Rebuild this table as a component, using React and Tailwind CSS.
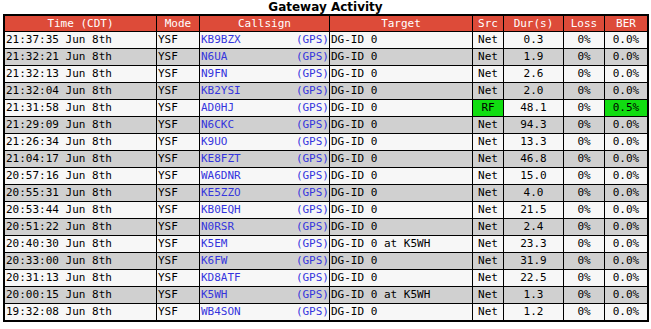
const rows = [
    ['21:37:35 Jun 8th', 'KB9BZX', 'DG-ID 0', 'Net', '0.3', '0%', '0.0%'],
    ['21:32:21 Jun 8th', 'N6UA', 'DG-ID 0', 'Net', '1.9', '0%', '0.0%'],
    ['21:32:13 Jun 8th', 'N9FN', 'DG-ID 0', 'Net', '2.6', '0%', '0.0%'],
    ['21:32:04 Jun 8th', 'KB2YSI', 'DG-ID 0', 'Net', '2.0', '0%', '0.0%'],
    ['21:31:58 Jun 8th', 'AD0HJ', 'DG-ID 0', 'RF', '48.1', '0%', '0.5%'],
    ['21:29:09 Jun 8th', 'N6CKC', 'DG-ID 0', 'Net', '94.3', '0%', '0.0%'],
    ['21:26:34 Jun 8th', 'K9UO', 'DG-ID 0', 'Net', '13.3', '0%', '0.0%'],
    ['21:04:17 Jun 8th', 'KE8FZT', 'DG-ID 0', 'Net', '46.8', '0%', '0.0%'],
    ['20:57:16 Jun 8th', 'WA6DNR', 'DG-ID 0', 'Net', '15.0', '0%', '0.0%'],
    ['20:55:31 Jun 8th', 'KE5ZZO', 'DG-ID 0', 'Net', '4.0', '0%', '0.0%'],
    ['20:53:44 Jun 8th', 'KB0EQH', 'DG-ID 0', 'Net', '21.5', '0%', '0.0%'],
    ['20:51:22 Jun 8th', 'N0RSR', 'DG-ID 0', 'Net', '2.4', '0%', '0.0%'],
    ['20:40:30 Jun 8th', 'K5EM', 'DG-ID 0 at K5WH', 'Net', '23.3', '0%', '0.0%'],
    ['20:33:00 Jun 8th', 'K6FW', 'DG-ID 0', 'Net', '31.9', '0%', '0.0%'],
    ['20:31:13 Jun 8th', 'KD8ATF', 'DG-ID 0', 'Net', '22.5', '0%', '0.0%'],
    ['20:00:15 Jun 8th', 'K5WH', 'DG-ID 0 at K5WH', 'Net', '1.3', '0%', '0.0%'],
    ['19:32:08 Jun 8th', 'WB4SON', 'DG-ID 0', 'Net', '1.2', '0%', '0.0%'],
];

const headers = ['Time (CDT)', 'Mode', 'Callsign', 'Target', 'Src', 'Dur(s)', 'Loss', 'BER'];

const grid = 'grid grid-cols-[151px_42px_129px_142px_30px_59px_40px_42px] gap-x-px';

const App = () => {
    return (
        <div className="w-[651px] h-[329px] bg-white font-['DejaVu_Sans_Mono',monospace] text-[11px] text-black">
            <h1 className="h-[14px] leading-[14px] text-center font-['DejaVu_Sans',sans-serif] text-[12px] font-bold text-black">
                Gateway Activity
            </h1>

            {/* Activity table */}
            <div className="ml-[3px] w-[646px] border-2 border-black bg-black flex flex-col gap-y-px">
                <div className={grid}>
                    {headers.map(h => (
                        <div key={h} className="h-[15px] leading-[15px] bg-[#dd4b39] text-white text-center">{h}</div>
                    ))}
                </div>

                {rows.map((r, i) => {
                    const bg = i % 2 === 0 ? 'bg-[#f7f7f7]' : 'bg-[#d0d0d0]';
                    const rf = r[3] === 'RF';
                    return (
                        <div key={r[0]} className={`${grid} h-[16px] leading-[16px]`}>
                            <div className={`${bg} pl-px whitespace-nowrap`}>{r[0]}</div>
                            <div className={`${bg} pl-px`}>YSF</div>
                            <div className={`${bg} pl-px flex justify-between text-[#3535dd]`}>
                                <span>{r[1]}</span>
                                <span>(GPS)</span>
                            </div>
                            <div className={`${bg} pl-px whitespace-nowrap`}>{r[2]}</div>
                            <div className={`${rf ? 'bg-[#11dd11]' : bg} text-center`}>{r[3]}</div>
                            <div className={`${bg} text-center`}>{r[4]}</div>
                            <div className={`${bg} text-center`}>{r[5]}</div>
                            <div className={`${rf ? 'bg-[#11dd11]' : bg} text-center`}>{r[6]}</div>
                        </div>
                    );
                })}
            </div>
        </div>
    );
};

export default App;
